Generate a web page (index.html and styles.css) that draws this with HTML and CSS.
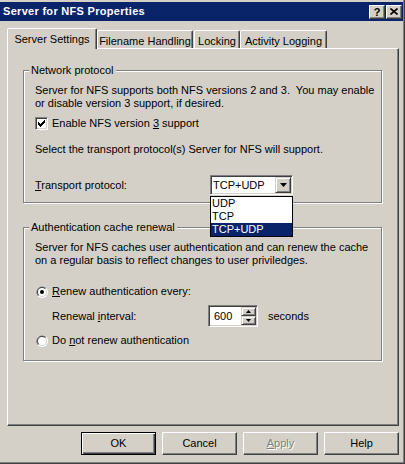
FILE: index.html
```html
<!DOCTYPE html>
<html>
<head>
<meta charset="utf-8">
<title>Server for NFS Properties</title>
<link rel="stylesheet" href="styles.css">
</head>
<body>
<div class="window">
  <div class="titlebar">
    <span class="title">Server for NFS Properties</span>
    <div class="capbtns">
      <span class="capbtn help">?</span>
      <span class="capbtn close"><svg width="8" height="7" viewBox="0 0 8 7"><path d="M0.5 0.5 L7.5 6.5 M7.5 0.5 L0.5 6.5" stroke="#000" stroke-width="1.6" fill="none"/></svg></span>
    </div>
  </div>
  <div class="client">
    <div class="tabs">
      <div class="tab active t1">Server Settings</div>
      <div class="tab t2">Filename Handling</div>
      <div class="tab t3">Locking</div>
      <div class="tab t4">Activity Logging</div>
    </div>
    <div class="panel">
      <fieldset class="group g1">
        <legend>Network protocol</legend>
        <p class="para">Server for NFS supports both NFS versions 2 and 3.&nbsp; You may enable<br>or disable version 3 support, if desired.</p>
        <div class="row chkrow">
          <span class="check"><svg width="7" height="7" viewBox="0 0 7 7"><path d="M0 2h1v1h1v1h1v-1h1v-1h1v-1h1v-1h1v3h-1v1h-1v1h-1v1h-1v1h-1v-1h-1v-1h-1z" fill="#000"/></svg></span>
          <span>Enable NFS version <u>3</u> support</span>
        </div>
        <p class="para p2">Select the transport protocol(s) Server for NFS will support.</p>
        <div class="row transport">
          <span class="lbl-t"><u>T</u>ransport protocol:</span>
          <div class="combo-wrap">
            <div class="combo">
              <span class="combo-text">TCP+UDP</span>
              <span class="dd-btn"><svg width="7" height="4" viewBox="0 0 7 4"><path d="M0 0h7l-3.5 4z" fill="#000"/></svg></span>
            </div>
            <ul class="dd-list">
              <li>UDP</li>
              <li>TCP</li>
              <li class="sel">TCP+UDP</li>
            </ul>
          </div>
        </div>
      </fieldset>
      <fieldset class="group g2">
        <legend>Authentication cache renewal</legend>
        <p class="para">Server for NFS caches user authentication and can renew the cache<br>on a regular basis to reflect changes to user priviledges.</p>
        <div class="row radrow r1">
          <span class="radio"><svg width="12" height="12" viewBox="0 0 12 12"><circle cx="6" cy="6" r="6" fill="#fff"/><path d="M1.76 10.24A6 6 0 0 1 10.24 1.76Z" fill="#808080"/><circle cx="6" cy="6" r="5" fill="#d4d0c8"/><path d="M2.46 9.54A5 5 0 0 1 9.54 2.46Z" fill="#404040"/><circle cx="6" cy="6" r="4" fill="#fff"/><circle cx="6" cy="6" r="2" fill="#000"/></svg></span>
          <span><u>R</u>enew authentication every:</span>
        </div>
        <div class="row introw">
          <span class="lbl-i">Renewal <u>i</u>nterval:</span>
          <div class="spin">
            <span class="spin-text">600</span>
            <div class="spin-btns">
              <span class="sbtn"><svg width="5" height="3" viewBox="0 0 5 3"><path d="M2.5 0L5 3H0z" fill="#000"/></svg></span>
              <span class="sbtn"><svg width="5" height="3" viewBox="0 0 5 3"><path d="M0 0h5L2.5 3z" fill="#000"/></svg></span>
            </div>
          </div>
          <span class="secs">seconds</span>
        </div>
        <div class="row radrow r2">
          <span class="radio"><svg width="12" height="12" viewBox="0 0 12 12"><circle cx="6" cy="6" r="6" fill="#fff"/><path d="M1.76 10.24A6 6 0 0 1 10.24 1.76Z" fill="#808080"/><circle cx="6" cy="6" r="5" fill="#d4d0c8"/><path d="M2.46 9.54A5 5 0 0 1 9.54 2.46Z" fill="#404040"/><circle cx="6" cy="6" r="4" fill="#fff"/></svg></span>
          <span>Do <u>n</u>ot renew authentication</span>
        </div>
      </fieldset>
    </div>
    <div class="buttons">
      <span class="btn default">OK</span>
      <span class="btn">Cancel</span>
      <span class="btn disabled"><u>A</u>pply</span>
      <span class="btn">Help</span>
    </div>
  </div>
</div>
</body>
</html>
```
FILE: styles.css
```css
* { box-sizing: border-box; }
html, body { margin: 0; padding: 0; }
body {
  width: 405px;
  height: 464px;
  overflow: hidden;
  background: #d4d0c8;
  font-family: "Liberation Sans", Arial, sans-serif;
  font-size: 11px;
  line-height: 13px;
  color: #000;
}
.window {
  width: 405px;
  height: 464px;
  padding: 2px 1px 1px 0;
  border-right: 1px solid #404040;
  border-bottom: 1px solid #404040;
  box-shadow: inset -1px -1px #808080;
  display: flex;
  flex-direction: column;
}
.titlebar {
  height: 19px;
  background: #0a246a;
  display: flex;
  align-items: center;
  justify-content: space-between;
  padding: 0 1px 0 3px;
}
.title {
  color: #fff;
  font-weight: bold;
  letter-spacing: 0.3px;
}
.capbtns { display: flex; gap: 1px; }
.capbtn {
  width: 16px;
  height: 14px;
  background: #d4d0c8;
  border: 1px solid;
  border-color: #fff #404040 #404040 #fff;
  box-shadow: inset -1px -1px #808080;
  display: flex;
  align-items: center;
  justify-content: center;
  font-weight: bold;
  font-size: 11px;
  line-height: 12px;
}
.capbtn.close { padding-right: 1px; padding-bottom: 1px; }
.client { padding: 7px 0 0 7px; flex: 1; }
.tabs {
  display: flex;
  align-items: flex-end;
  height: 20px;
}
.tab {
  height: 18px;
  border-style: solid;
  border-width: 1px 1px 0 1px;
  border-color: #fff #404040 transparent #fff;
  box-shadow: inset -1px 0 #808080;
  border-radius: 2px 2px 0 0;
  padding-top: 4px;
  text-align: center;
  white-space: nowrap;
  background: #d4d0c8;
}
.tab.active {
  height: 21px;
  margin-bottom: -1px;
  position: relative;
  z-index: 1;
}
.t1 { width: 90px; }
.t2 { width: 96px; }
.t3 { width: 46px; margin-left: 1px; }
.t4 { width: 87px; }
.panel {
  width: 392px;
  height: 378px;
  border: 1px solid;
  border-color: #fff #404040 #404040 #fff;
  box-shadow: inset -1px -1px #808080;
  padding: 15px 0 0 15px;
}
.group {
  margin: 0;
  width: 359px;
  min-width: 0;
  padding: 7px 0 0 11px;
  border: 1px solid #808080;
  box-shadow: inset 1px 1px #fff, 1px 1px #fff;
}
.group legend {
  padding: 0 2px;
  margin-left: -6px;
  line-height: 13px;
  background: #d4d0c8;
}
.g1 { height: 139px; }
.g2 { height: 140px; margin-top: 18px; }
.para { margin: 0; white-space: nowrap; }
.row { display: flex; align-items: center; }
.chkrow { margin-top: 7px; height: 13px; }
.check {
  width: 13px;
  height: 13px;
  margin-right: 4px;
  background: #fff;
  border: 1px solid;
  border-color: #808080 #fff #fff #808080;
  box-shadow: inset 1px 1px #404040, inset -1px -1px #d4d0c8;
  display: flex;
  align-items: center;
  justify-content: center;
}
.p2 { margin-top: 13px; }
.transport { margin-top: 19px; height: 20px; }
.lbl-t { width: 175px; }
.combo-wrap { position: relative; }
.combo {
  width: 83px;
  height: 20px;
  padding: 1px;
  background: #fff;
  border: 1px solid;
  border-color: #808080 #fff #fff #808080;
  box-shadow: inset 1px 1px #404040, inset -1px -1px #d4d0c8;
  display: flex;
  align-items: center;
  justify-content: space-between;
}
.combo-text { padding-left: 1px; }
.dd-btn {
  width: 16px;
  height: 16px;
  background: #d4d0c8;
  border: 1px solid;
  border-color: #d4d0c8 #404040 #404040 #d4d0c8;
  box-shadow: inset 1px 1px #fff, inset -1px -1px #808080;
  display: flex;
  align-items: center;
  justify-content: center;
}
.dd-list {
  position: absolute;
  top: 21px;
  left: 0;
  width: 83px;
  margin: 0;
  padding: 0;
  list-style: none;
  background: #fff;
  border: 1px solid #000;
  z-index: 2;
}
.dd-list li { height: 13px; line-height: 13px; padding-left: 1px; }
.dd-list li.sel { background: #0a246a; color: #fff; }
.radrow { height: 13px; }
.r1 { margin-top: 18px; }
.r2 { margin-top: 7px; }
.radio { width: 12px; height: 12px; margin-left: 1px; margin-right: 4px; display: flex; }
.introw { margin-top: 7px; height: 22px; }
.lbl-i { width: 173px; padding-left: 17px; }
.spin {
  width: 50px;
  height: 22px;
  padding: 1px;
  background: #fff;
  border: 1px solid;
  border-color: #808080 #fff #fff #808080;
  box-shadow: inset 1px 1px #404040, inset -1px -1px #d4d0c8;
  display: flex;
  align-items: center;
  justify-content: space-between;
}
.spin-text { padding-left: 4px; }
.spin-btns { display: flex; flex-direction: column; width: 15px; height: 18px; }
.sbtn {
  height: 9px;
  background: #d4d0c8;
  border: 1px solid;
  border-color: #d4d0c8 #404040 #404040 #d4d0c8;
  box-shadow: inset 1px 1px #fff, inset -1px -1px #808080;
  display: flex;
  align-items: center;
  justify-content: center;
}
.secs { margin-left: 10px; }
.buttons {
  display: flex;
  gap: 6px;
  margin-top: 6px;
  padding-left: 74px;
}
.btn {
  width: 75px;
  height: 23px;
  background: #d4d0c8;
  border: 1px solid;
  border-color: #fff #404040 #404040 #fff;
  box-shadow: inset -1px -1px #808080;
  display: flex;
  align-items: center;
  justify-content: center;
}
.btn.default {
  border-color: #000;
  box-shadow: inset 1px 1px #fff, inset -1px -1px #404040, inset -2px -2px #808080;
}
.btn.disabled { color: #808080; text-shadow: 1px 1px #fff; }
```
